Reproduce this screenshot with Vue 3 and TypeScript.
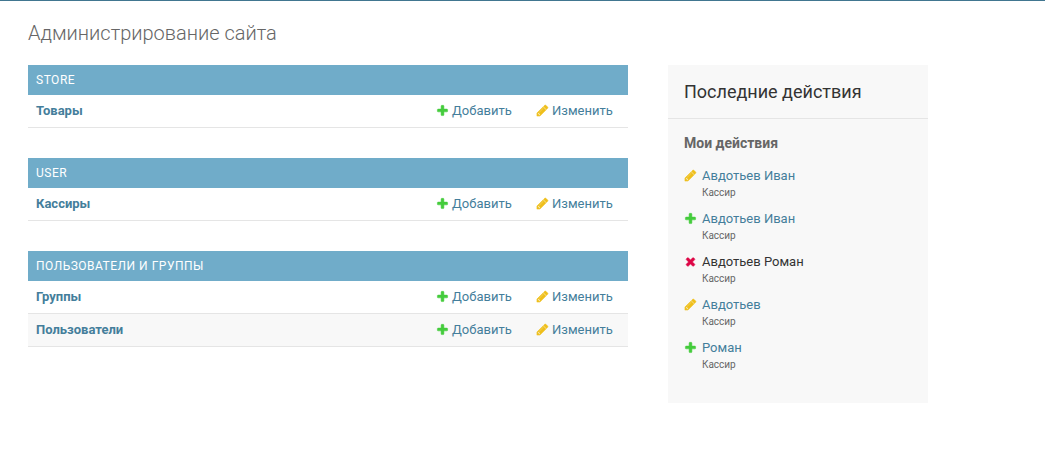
<script setup lang="ts">
type Kind = 'add' | 'change' | 'delete'

interface AppModule {
  title: string
  models: string[]
}

interface LogEntry {
  kind: Kind
  name: string
  type: string
}

const modules: AppModule[] = [
  { title: 'Store', models: ['Товары'] },
  { title: 'User', models: ['Кассиры'] },
  { title: 'Пользователи и группы', models: ['Группы', 'Пользователи'] },
]

const entries: LogEntry[] = [
  { kind: 'change', name: 'Авдотьев Иван', type: 'Кассир' },
  { kind: 'add', name: 'Авдотьев Иван', type: 'Кассир' },
  { kind: 'delete', name: 'Авдотьев Роман', type: 'Кассир' },
  { kind: 'change', name: 'Авдотьев', type: 'Кассир' },
  { kind: 'add', name: 'Роман', type: 'Кассир' },
]

const icons: Record<Kind, string> = {
  add: 'M1600 796v192q0 40-28 68t-68 28h-416v416q0 40-28 68t-68 28h-192q-40 0-68-28t-28-68v-416h-416q-40 0-68-28t-28-68v-192q0-40 28-68t68-28h416v-416q0-40 28-68t68-28h192q40 0 68 28t28 68v416h416q40 0 68 28t28 68z',
  change:
    'M491 1536l91-91-235-235-91 91v107h128v128h107zm523-928q0-22-22-22-10 0-17 7l-542 542q-7 7-7 17 0 22 22 22 10 0 17-7l542-542q7-7 7-17zm-54-192l416 416-832 832h-416v-416zm683 96q0 53-37 90l-166 166-416-416 166-165q36-38 90-38 53 0 91 38l235 234q37 39 37 91z',
  delete:
    'M1490 1322q0 40-28 68l-136 136q-28 28-68 28t-68-28l-294-294-294 294q-28 28-68 28t-68-28l-136-136q-28-28-28-68t28-68l294-294-294-294q-28-28-28-68t28-68l136-136q28-28 68-28t68 28l294 294 294-294q28-28 68-28t68 28l136 136q28 28 28 68t-28 68l-294 294 294 294q28 28 28 68z',
}
</script>

<template>
  <div class="page">
    <h1>Администрирование сайта</h1>
    <div class="columns">
      <main class="modules">
        <table v-for="mod in modules" :key="mod.title">
          <caption>
            <a href="#" class="section">{{ mod.title }}</a>
          </caption>
          <tbody>
            <tr v-for="model in mod.models" :key="model">
              <th scope="row"><a href="#">{{ model }}</a></th>
              <td>
                <a href="#" class="action">
                  <svg class="icon add" viewBox="0 0 1792 1792" aria-hidden="true"><path :d="icons.add" /></svg>
                  <span>Добавить</span>
                </a>
              </td>
              <td>
                <a href="#" class="action">
                  <svg class="icon change" viewBox="0 0 1792 1792" aria-hidden="true"><path :d="icons.change" /></svg>
                  <span>Изменить</span>
                </a>
              </td>
            </tr>
          </tbody>
        </table>
      </main>
      <aside class="recent">
        <h2>Последние действия</h2>
        <h3>Мои действия</h3>
        <ul>
          <li v-for="(entry, i) in entries" :key="i">
            <svg class="icon" :class="entry.kind" viewBox="0 0 1792 1792" aria-hidden="true">
              <path :d="icons[entry.kind]" />
            </svg>
            <div>
              <span v-if="entry.kind === 'delete'" class="name">{{ entry.name }}</span>
              <a v-else href="#" class="name">{{ entry.name }}</a>
              <span class="type">{{ entry.type }}</span>
            </div>
          </li>
        </ul>
      </aside>
    </div>
  </div>
</template>

<style>
body {
  margin: 0;
  background: #fff;
}
</style>

<style scoped>
.page {
  border-top: 1px solid #417690;
  padding: 20px 28px 62px;
  color: #333;
  font-family: Roboto, "Liberation Sans", sans-serif;
  font-size: 13px;
}

a {
  color: #447e9b;
  text-decoration: none;
}

h1 {
  margin: 0 0 20px;
  color: #666;
  font-size: 20px;
  font-weight: 300;
  line-height: 24px;
}

.columns {
  display: grid;
  grid-template-columns: minmax(0, 600px) 260px;
  column-gap: 40px;
  align-items: start;
}

.modules {
  display: flex;
  flex-direction: column;
  gap: 30px;
}

table {
  width: 100%;
  table-layout: fixed;
  border-collapse: separate;
  border-spacing: 0;
}

caption {
  padding: 8px;
  background: #70acc9;
  font-size: 12px;
  line-height: 14px;
  letter-spacing: 0.5px;
  text-align: left;
  text-transform: uppercase;
}

.section {
  display: block;
  color: #fff;
}

th,
td {
  padding: 8px;
  border-bottom: 1px solid #e5e5e5;
  line-height: 16px;
  text-align: left;
}

th {
  font-weight: 700;
}

td {
  width: 84px;
}

tr:nth-child(even) {
  background: #f8f8f8;
}

.action {
  display: flex;
  align-items: flex-start;
  gap: 3px;
}

.icon {
  display: block;
  flex: none;
  width: 13px;
  height: 13px;
  margin-top: 1px;
  fill: currentColor;
  stroke: currentColor;
  stroke-width: 70;
}

.add {
  color: #44cc3c;
}

.change {
  color: #efbf1c;
}

.delete {
  color: #dd0646;
}

.recent {
  padding-bottom: 32px;
  background: #f8f8f8;
}

h2 {
  margin: 0 0 15px;
  padding: 16px;
  border-bottom: 1px solid #e5e5e5;
  font-size: 18px;
  font-weight: 400;
  line-height: 21px;
}

h3 {
  margin: 0 16px 16px;
  color: #666;
  font-size: 14px;
  font-weight: 700;
  line-height: 18px;
}

ul {
  display: grid;
  gap: 12px;
  margin: 0;
  padding: 0 16px;
  list-style: none;
}

li {
  display: flex;
  gap: 5px;
}

.name,
.type {
  display: block;
}

.name {
  line-height: 16px;
}

.type {
  margin-top: 3px;
  color: #666;
  font-size: 10px;
  line-height: 12px;
}
</style>
